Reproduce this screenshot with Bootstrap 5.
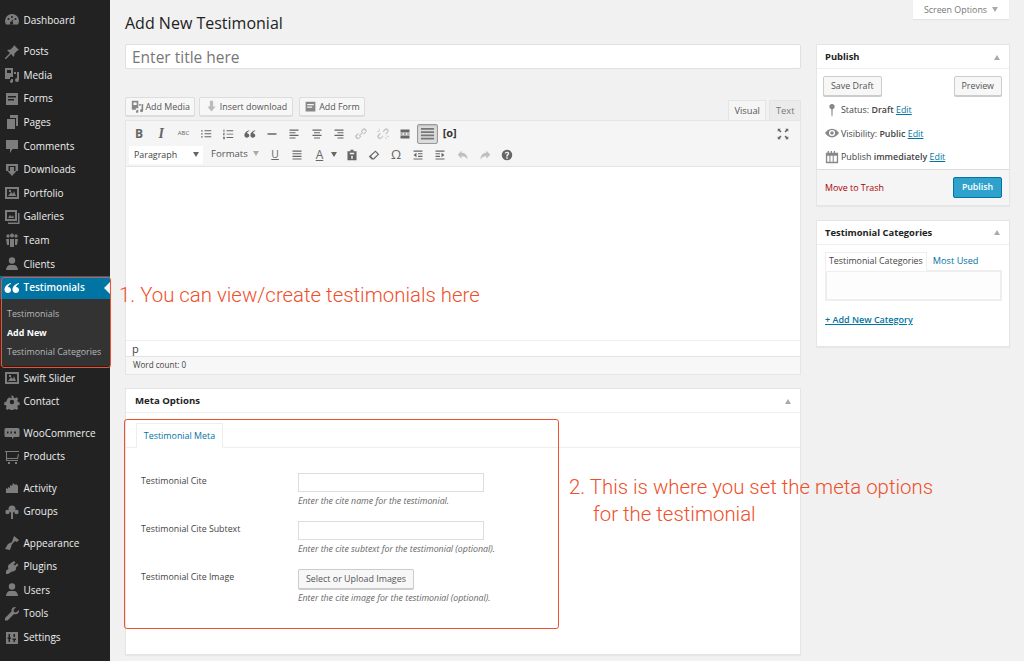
<!DOCTYPE html>
<html lang="en">
<head>
  <meta charset="UTF-8">
  <title>Add New Testimonial</title>
  <link href="https://cdn.jsdelivr.net/npm/bootstrap@5.3.0/dist/css/bootstrap.min.css" rel="stylesheet">
  <style>
    html, body { height: 661px; overflow: hidden; }
    body { background: #f1f1f1; font-family: "Open Sans", sans-serif; font-size: 8.9px; color: #444; position: relative; }
    a { color: #0074a2; }
    b { font-weight: 600; }
    .sprite { position: absolute; }
    .wp-side { width: 110px; height: 661px; background: #222; padding-top: 8.5px; flex: none; }
    .side-item { height: 23.6px; display: flex; align-items: center; color: #eee; font-size: 10px; text-decoration: none; position: relative; }
    .side-item svg { width: 16px; height: 16px; margin-left: 4px; margin-right: 3.5px; fill: #7d7d7d; flex: none; }
    .side-gap { height: 7.8px; flex: none; }
    .side-on { background: #0074a2; color: #fff; font-weight: 600; }
    .side-on svg { fill: #fff; }
    .side-on::after { content: ""; position: absolute; right: 0; top: 6px; border: 6px solid transparent; border-right-color: #f1f1f1; border-left-width: 0; }
    .side-sub { background: #333; height: 67px; padding-top: 5px; }
    .sub-link { display: block; height: 19px; line-height: 19px; padding-left: 7px; font-size: 8.9px; color: #b4b9be; text-decoration: none; white-space: nowrap; }
    .sub-link.now { color: #fff; font-weight: 700; }
    .wp-main { width: 914px; padding: 0 14px 0 15px; position: relative; }
    .screen-tab { position: absolute; right: 15px; top: 0; width: 96px; height: 19px; background: #fff; box-shadow: 0 1px 1px rgba(0,0,0,.05); color: #777; font-size: 8.9px; line-height: 19px; text-align: center; }
    .tri-down { display: inline-block; border: 3.5px solid transparent; border-top: 5px solid #aaa; border-bottom: 0; margin-left: 5px; vertical-align: 1px; }
    .tri-dark { border-top-color: #666; margin-left: 0; }
    .tri-up { border: 3.5px solid transparent; border-bottom: 5px solid #aaa; border-top: 0; }
    .page-head { font-size: 16px; font-weight: 400; color: #222; line-height: 25px; padding-top: 11px; margin: 0; height: 44px; }
    .left-col { width: 676px; }
    .right-col { width: 194px; }
    .title-box { height: 25px; width: 100%; border: 1px solid #e0e0e0; background: #fff; font-size: 15.5px; line-height: 25px; padding: 0 6px; color: #777; border-radius: 2px; }
    .grey-btn { border: 1px solid #ccc; background: #f7f7f7; color: #555; font-size: 8.9px; border-radius: 2px; box-shadow: 0 1px 0 #ccc; height: 20px; padding: 0 7px; display: inline-flex; align-items: center; white-space: nowrap; }
    .media-row { height: 23px; margin-top: 28px; }
    .media-btns { display: flex; gap: 4px; }
    .media-row .grey-btn { height: 19px; padding: 0 4.5px; border-color: #ddd; box-shadow: 0 1px 0 #ddd; }
    .media-row svg { width: 13px; height: 13px; fill: #888; margin-right: 2px; }
    .media-row .pale svg { fill: #bbb; }
    .media-last { margin-left: 2px; }
    .ed-tabs { display: flex; margin-top: 3px; }
    .ed-tab { height: 20px; line-height: 19px; font-size: 9.3px; padding: 0 5.5px; color: #777; background: #ebebeb; border: 1px solid #e4e4e4; border-bottom: 0; margin-left: 3px; }
    .ed-tab.on { background: #f5f5f5; color: #555; }
    .ed-wrap { border: 1px solid #e5e5e5; background: #fff; }
    .ed-bar { height: 46px; background: #f5f5f5; border-bottom: 1px solid #e4e4e4; padding: 2px 3px 0 2px; }
    .bar-row { height: 21px; display: flex; align-items: center; }
    .tool { width: 22.2px; height: 20px; display: flex; align-items: center; justify-content: center; color: #666; flex: none; font-size: 12px; }
    .tool svg { width: 12px; height: 12px; fill: #666; }
    .tool.dim svg { fill: #c0c0c0; }
    .tool.on { width: 20.2px; margin: 0 1px; background: #ddd; border: 1px solid #999; border-radius: 2px; box-shadow: inset 0 1px 2px rgba(0,0,0,.15); }
    .tool.on svg { fill: #777; width: 15px; height: 15px; }
    .tool-b { font-weight: 700; }
    .tool-i { font-family: "Liberation Serif", serif; font-style: italic; font-size: 14px; font-weight: 700; }
    .tool-abc { font-size: 6px; }
    .tool-sc { color: #333; font-size: 11px; font-weight: 700; }
    .tool-u { font-size: 10.4px; text-decoration: underline; margin-left: 1px; }
    .tool-a { text-decoration: underline; font-size: 12px; }
    .tool-om { font-size: 13px; }
    .tool-paste { margin-left: 4px; }
    .tool-full { margin-left: auto; margin-right: 3px; }
    .bar-sel { width: 74px; height: 18px; background: #fff; color: #444; font-size: 8.9px; padding: 0 4px 0 5px; margin: 0 8px 0 1px; display: flex; align-items: center; justify-content: space-between; }
    .bar-fmt { width: 52px; font-size: 9.6px; color: #555; }
    .ed-body { height: 174px; border-bottom: 1px solid #eee; }
    .ed-path { height: 16px; line-height: 15px; padding-left: 6px; font-size: 11px; color: #444; border-bottom: 1px solid #e4e4e4; }
    .ed-count { height: 17px; line-height: 15px; padding-left: 7px; font-size: 8.1px; background: #f7f7f7; color: #444; }
    .meta-card { background: #fff; border: 1px solid #e5e5e5; height: 267px; margin-top: 13px; box-shadow: 0 1px 1px rgba(0,0,0,.04); }
    .card-head { height: 24px; padding: 1px 9px 0; font-size: 9.6px; font-weight: 700; color: #222; border-bottom: 1px solid #eee; display: flex; align-items: center; justify-content: space-between; }
    .side-card .card-head { padding-left: 8px; font-size: 9.4px; }
    .meta-tabs { height: 35px; border-bottom: 1px solid #eee; padding: 10px 0 0 10px; }
    .meta-tab { display: inline-block; width: 87px; height: 25px; line-height: 23px; text-align: center; border: 1px solid #eee; border-bottom: 1px solid #fff; color: #0074a2; font-size: 8.9px; background: #fff; }
    .meta-rows { padding-top: 25px; }
    .meta-row { height: 48px; padding-left: 15px; display: flex; font-size: 8.8px; color: #444; }
    .meta-label { width: 157px; line-height: 16px; }
    .meta-input { width: 186px; height: 19px; border: 1px solid #ddd; background: #fff; }
    .meta-help { font-style: italic; font-size: 8.8px; color: #666; line-height: 12px; margin-top: 3px; }
    .side-card { background: #fff; border: 1px solid #e5e5e5; box-shadow: 0 1px 1px rgba(0,0,0,.04); }
    .pub-btns { padding: 7px 7px 2px 6px; display: flex; justify-content: space-between; }
    .pub-lines { padding: 0 7px 0 8px; }
    .pub-line { height: 23.6px; display: flex; align-items: center; font-size: 8.9px; }
    .pub-line svg { width: 14px; height: 14px; fill: #888; margin-right: 2px; flex: none; }
    .pub-foot { height: 36px; background: #f5f5f5; border-top: 1px solid #ddd; padding: 0 7px 0 8px; display: flex; align-items: center; justify-content: space-between; }
    .trash { color: #a00; }
    .pub-btn { width: 49px; height: 21px; background: #2ea2cc; border: 1px solid #0074a2; border-radius: 2px; color: #fff; font-size: 8.8px; font-weight: 600; text-align: center; line-height: 19px; }
    .cat-card { height: 127px; margin-top: 14px; }
    .cat-wrap { padding: 7px 8px 0; }
    .cat-tab { display: inline-block; height: 19px; line-height: 17px; border: 1px solid #eee; border-bottom: 1px solid #fff; padding: 0 3px; font-size: 8.85px; color: #444; position: relative; margin-bottom: -1px; }
    .cat-used { font-size: 9.2px; color: #0074a2; margin-left: 6px; }
    .cat-panel { height: 31px; border: 2px solid #eee; background: #fdfdfd; width: 177px; }
    .cat-add { display: block; margin-top: 12px; font-size: 9px; font-weight: 600; }
    .mark-box { position: absolute; border: 1.5px solid #f0502d; pointer-events: none; border-radius: 3px; }
    .mark-side { left: 1px; top: 277px; width: 110px; height: 91px; }
    .mark-meta { left: 124px; top: 419px; width: 435px; height: 210px; }
    .mark-text { position: absolute; color: #ef4f2b; font-family: Roboto, "Liberation Sans", sans-serif; font-weight: 300; font-size: 20.4px; line-height: 28px; white-space: nowrap; }
    .note-one { left: 119px; top: 281px; }
    .note-two { left: 569px; top: 473px; }
    .note-three { left: 593px; top: 500px; }
  </style>
</head>
<body>

<svg width="0" height="0" class="sprite">
  <symbol id="i-dash" viewBox="0 0 16 16"><path d="M8 2a7 7 0 0 0-6 10.500h12A7 7 0 0 0 8 2zm0 2a1 1 0 1 1 0 2 1 1 0 0 1 0-2zM4.500 6a1 1 0 1 1 0 2 1 1 0 0 1 0-2zm7 0a1 1 0 1 1 0 2 1 1 0 0 1 0-2zM9.500 7 8.600 10a1.500 1.500 0 1 1-1.300-.4z" fill-rule="evenodd"/></symbol>
  <symbol id="i-pin" viewBox="0 0 16 16"><path d="M10 1l5 5-1.500.5-3 3L10 13 7 10l-5 5-1 0 0-1 5-5-3-3 3.500-.5 3-3z"/></symbol>
  <symbol id="i-media" viewBox="0 0 16 16"><path d="M1 1h8v9H6v2H1zm2 2v3h4V3zM10 5h2v2h-2zm3 0h2v8a2 2 0 1 1-2-2zM7 12h2v2a1.500 1.500 0 1 1-2-1z" fill-rule="evenodd"/></symbol>
  <symbol id="i-form" viewBox="0 0 16 16"><path d="M2 2h12v12H2zm2 3v1.500h8V5zm0 3v1.500h6V8z" fill-rule="evenodd"/></symbol>
  <symbol id="i-pages" viewBox="0 0 16 16"><path d="M6 1h8v11h-2V4H6zM3 5h8v10H3z"/></symbol>
  <symbol id="i-bubble" viewBox="0 0 16 16"><path d="M2 2h12v9H8.500L6 15v-4H2z"/></symbol>
  <symbol id="i-down" viewBox="0 0 16 16"><path d="M2 2h12v7h-2.500V4h-7v5H2zM6 5h4v4h2.500L8 14 3.500 9H6z"/></symbol>
  <symbol id="i-insert" viewBox="0 0 16 16"><path d="M6 1h4v7h3l-5 6-5-6h3z"/></symbol>
  <symbol id="i-image" viewBox="0 0 16 16"><path d="M1 2h14v12H1zm2 2v8h10V4zm1 7 3-4 2 2 1-3 2 5zM5 5h2v2H5z" fill-rule="evenodd"/></symbol>
  <symbol id="i-gallery" viewBox="0 0 16 16"><path d="M1 1h12v11H1zm2 2v7h8V3zm1 6 2-3 2 2 1-2 1 3zM14 4h1.500v11H4v-1.500h10z" fill-rule="evenodd"/></symbol>
  <symbol id="i-team" viewBox="0 0 16 16"><circle cx="4" cy="4" r="1.700"/><circle cx="8" cy="3.500" r="2"/><circle cx="12" cy="4" r="1.700"/><path d="M2 7h3v6H3zM6 7h4v8H6zM11 7h3l-1 6h-2z"/></symbol>
  <symbol id="i-user" viewBox="0 0 16 16"><circle cx="8" cy="4.500" r="3.200"/><path d="M2 14c0-3 2-5 4-5h4c2 0 4 2 4 5z"/></symbol>
  <symbol id="i-quote" viewBox="0 0 16 16"><path d="M7 3C3 4 .5 6.500.5 9.800.5 11.800 2 13 3.800 13S7 11.700 7 10 5.700 7 4 7c0-1 1-2.300 3-3zM15 3c-4 1-6.500 3.500-6.500 6.800 0 2 1.500 3.200 3.300 3.200S15 11.700 15 10s-1.300-3-3-3c0-1 1-2.300 3-3z"/></symbol>
  <symbol id="i-gear" viewBox="0 0 16 16"><path d="M6.500 1h3l.4 2 1.500.7 1.800-1.100 2 2.100-1.100 1.700.7 1.600 2 .5v3l-2 .4-.7 1.500 1.100 1.800-2.100 2-1.700-1.100-1.600.7-.4 2h-3l-.4-2-1.500-.7-1.800 1.100-2-2.100 1.100-1.700-.7-1.600-2-.4v-3l2-.4.7-1.500L2.700 4.700l2.100-2 1.700 1.100 1.600-.7zM8 5.500a2.500 2.500 0 1 0 0 5 2.500 2.500 0 0 0 0-5z" fill-rule="evenodd" transform="translate(1 1) scale(.87)"/></symbol>
  <symbol id="i-woo" viewBox="0 0 16 16"><path d="M2 3h12a1.500 1.500 0 0 1 1.500 1.500v6A1.500 1.500 0 0 1 14 12h-4l-2 2v-2H2a1.500 1.500 0 0 1-1.500-1.500v-6A1.500 1.500 0 0 1 2 3zm1 3.500v2h1.500v-2zm3.500 0v2h1.500v-2zm3.500 0v2h2v-2z" fill-rule="evenodd"/></symbol>
  <symbol id="i-cart" viewBox="0 0 16 16"><path d="M1 2h14v1H3v6h10l1-4h1l-1 5H3v1h11v1H2V3H1zM4 13h2v2H4zM11 13h2v2h-2z"/></symbol>
  <symbol id="i-activity" viewBox="0 0 16 16"><path d="M2 13V8l2 1V7l2 1V5l2 1 1-3 2 2 1-1 2 2v7z"/></symbol>
  <symbol id="i-groups" viewBox="0 0 16 16"><circle cx="8" cy="5" r="3.500"/><circle cx="3.500" cy="8" r="2.200"/><circle cx="12.500" cy="8" r="2.200"/><path d="M7 8h2v7H7z"/></symbol>
  <symbol id="i-brush" viewBox="0 0 16 16"><path d="M10 1l5 4-2 2-2-1-3 3-2 6-5-1 3-5 4-2 1-3z"/></symbol>
  <symbol id="i-plug" viewBox="0 0 16 16"><path d="M10 2l1.500 1.500-2 2 1.500 1 2-2L14.500 6 12 8.500c.5 2-1 4-4 4L4 15H2v-3l2.500-2.500c-1-2-.5-3 .5-4z"/></symbol>
  <symbol id="i-wrench" viewBox="0 0 16 16"><path d="M15 4l-3 2.500-2-.5-.5-2L12 1c-3-.5-5 1.500-4.500 4.500L1 12v2.500h2.500L10 8c3 1 5.500-1 5-4z"/></symbol>
  <symbol id="i-settings" viewBox="0 0 16 16"><path d="M2 2h12v12H2zm2.500 2v3.500H3.500V9h1v3H6V9h1V7.500H6V4zm5 0v3h1.500V4zm0 4.500H8.500V10h1v2H11v-2h1V8.500z" fill-rule="evenodd"/></symbol>
  <symbol id="i-status" viewBox="0 0 16 16"><circle cx="8" cy="4" r="3"/><path d="M7.200 6h1.600l-.3 9h-1z"/></symbol>
  <symbol id="i-eye" viewBox="0 0 16 16"><path d="M8 3c3.500 0 6.500 2.500 8 5-1.500 2.500-4.500 5-8 5s-6.500-2.500-8-5c1.500-2.500 4.500-5 8-5zm0 1.500a3.500 3.500 0 1 0 0 7 3.500 3.500 0 0 0 0-7zM8 6a2 2 0 1 1 0 4 2 2 0 0 1 0-4z" fill-rule="evenodd"/></symbol>
  <symbol id="i-cal" viewBox="0 0 16 16"><path d="M1 3h2V1h1.500v2h2V1H8v2h2V1h1.500v2H15v12H1zm1.500 3.500v7H5v-7zm3.700 0v7h2.600v-7zm3.800 0v7h3.500v-7z" fill-rule="evenodd"/></symbol>
  <symbol id="t-ul" viewBox="0 0 16 16"><path d="M1.500 3h2v1.500h-2zM6 3h9v1.200H6zM1.500 7h2v1.500h-2zM6 7h9v1.200H6zM1.500 11h2v1.500h-2zM6 11h9v1.200H6z"/></symbol>
  <symbol id="t-ol" viewBox="0 0 16 16"><path d="M2 2h1.200v3.500H2zM1.500 7h2.200v1H2.500v.6h1.200v1H1.500zM1.500 11.500h2.200V15H1.500v-1h1.200v-.2H1.500zM6 3h9v1.200H6zM6 7.500h9v1.200H6zM6 12h9v1.200H6z"/></symbol>
  <symbol id="t-hr" viewBox="0 0 16 16"><path d="M2 7h12v2H2z"/></symbol>
  <symbol id="t-left" viewBox="0 0 16 16"><path d="M2 2h12v1.500H2zM2 5.500h8V7H2zM2 9h12v1.500H2zM2 12.500h8V14H2z"/></symbol>
  <symbol id="t-center" viewBox="0 0 16 16"><path d="M2 2h12v1.500H2zM4 5.500h8V7H4zM2 9h12v1.500H2zM4 12.500h8V14H4z"/></symbol>
  <symbol id="t-right" viewBox="0 0 16 16"><path d="M2 2h12v1.500H2zM6 5.500h8V7H6zM2 9h12v1.500H2zM6 12.500h8V14H6z"/></symbol>
  <symbol id="t-link" viewBox="0 0 16 16"><path d="M10 1.500a3 3 0 0 1 4.500 4.500L12 8.500 11 7.500l2.500-2.500A1.500 1.500 0 0 0 11 3L8.500 5.500l-1-1zM8.500 11 6 13.500A3 3 0 0 1 1.500 9L4 6.500l1 1L3 10a1.500 1.500 0 0 0 2.500 2.500L7.500 10zM5 10l5-5 1 1-5 5z"/></symbol>
  <symbol id="t-unlink" viewBox="0 0 16 16"><path d="M10 1.500a3 3 0 0 1 4.500 4.500L12 8.500 11 7.500l2.500-2.500A1.500 1.500 0 0 0 11 3L8.500 5.500l-1-1zM8.500 11 6 13.500A3 3 0 0 1 1.500 9L4 6.500l1 1L3 10a1.500 1.500 0 0 0 2.500 2.500L7.500 10zM2 1l1 0 1 3-1 0zM0 4l3 1 0 1-3-1zM13 15l-1 0-1-3 1 0zM16 12l-3-1 0-1 3 1z"/></symbol>
  <symbol id="t-more" viewBox="0 0 16 16"><path d="M2 2h12v4H2zM2 7.300h3v1.400H2zM6.500 7.300h3v1.400h-3zM11 7.300h3v1.400h-3zM2 10h12v4H2z"/></symbol>
  <symbol id="t-kitchen" viewBox="0 0 16 16"><path d="M1 2h14v2H1zM1 5.500h14v2H1zM1 9h14v2H1zM1 12.500h14v2H1z"/></symbol>
  <symbol id="t-full" viewBox="0 0 16 16"><path d="M1 1h4L3.800 2.200 6 4.500 4.500 6 2.200 3.800 1 5zM15 1v4l-1.200-1.200L11.500 6 10 4.500l2.200-2.300L11 1zM1 15v-4l1.200 1.200L4.500 10 6 11.500l-2.200 2.300L5 15zM15 15h-4l1.200-1.200L10 11.500l1.500-1.500 2.300 2.200L15 11z"/></symbol>
  <symbol id="t-just" viewBox="0 0 16 16"><path d="M2 2h12v1.500H2zM2 5.500h12V7H2zM2 9h12v1.500H2zM2 12.500h12V14H2z"/></symbol>
  <symbol id="t-paste" viewBox="0 0 16 16"><path d="M6 1h4v2h4v12H2V3h4zm-1 4v2h6V5zm2 4v4h2V9z" fill-rule="evenodd"/></symbol>
  <symbol id="t-erase" viewBox="0 0 16 16"><path d="M10 2l5 5-7 7H5l-4-4zm-.2 2L4 9.800l3 3 5.800-5.800z" fill-rule="evenodd"/></symbol>
  <symbol id="t-out" viewBox="0 0 16 16"><path d="M2 2h12v1.500H2zM8 5.500h6V7H8zM8 9h6v1.500H8zM2 12.500h12V14H2zM6 5v6L2 8z"/></symbol>
  <symbol id="t-in" viewBox="0 0 16 16"><path d="M2 2h12v1.500H2zM2 5.500h6V7H2zM2 9h6v1.500H2zM2 12.500h12V14H2zM10 5v6l4-3z"/></symbol>
  <symbol id="t-undo" viewBox="0 0 16 16"><path d="M6 2v3c5 0 8 3 8 9-1.500-3-4-4.500-8-4.500V13L1 7.500z"/></symbol>
  <symbol id="t-redo" viewBox="0 0 16 16"><path d="M10 2v3C5 5 2 8 2 14c1.500-3 4-4.500 8-4.500V13l5-5.500z"/></symbol>
  <symbol id="t-help" viewBox="0 0 16 16"><path d="M8 1a7 7 0 1 1 0 14A7 7 0 0 1 8 1zM7 11v2h2v-2zM8 3.500C6.300 3.500 5 4.500 5 6h2c0-.5.400-1 1-1s1 .4 1 1c0 1-2 1.200-2 3.500V10h2c0-1.800 2-2 2-4.200 0-1.400-1.300-2.300-3-2.300z" fill-rule="evenodd"/></symbol>
</svg>

<div class="d-flex">
  <nav class="wp-side d-flex flex-column">
    <a class="side-item"><svg><use href="#i-dash"/></svg>Dashboard</a>
    <div class="side-gap"></div>
    <a class="side-item"><svg><use href="#i-pin"/></svg>Posts</a>
    <a class="side-item"><svg><use href="#i-media"/></svg>Media</a>
    <a class="side-item"><svg><use href="#i-form"/></svg>Forms</a>
    <a class="side-item"><svg><use href="#i-pages"/></svg>Pages</a>
    <a class="side-item"><svg><use href="#i-bubble"/></svg>Comments</a>
    <a class="side-item"><svg><use href="#i-down"/></svg>Downloads</a>
    <a class="side-item"><svg><use href="#i-image"/></svg>Portfolio</a>
    <a class="side-item"><svg><use href="#i-gallery"/></svg>Galleries</a>
    <a class="side-item"><svg><use href="#i-team"/></svg>Team</a>
    <a class="side-item"><svg><use href="#i-user"/></svg>Clients</a>
    <a class="side-item side-on"><svg><use href="#i-quote"/></svg>Testimonials</a>
    <div class="side-sub">
      <a class="sub-link">Testimonials</a>
      <a class="sub-link now">Add New</a>
      <a class="sub-link">Testimonial Categories</a>
    </div>
    <a class="side-item"><svg><use href="#i-image"/></svg>Swift Slider</a>
    <a class="side-item"><svg><use href="#i-gear"/></svg>Contact</a>
    <div class="side-gap"></div>
    <a class="side-item"><svg><use href="#i-woo"/></svg>WooCommerce</a>
    <a class="side-item"><svg><use href="#i-cart"/></svg>Products</a>
    <div class="side-gap"></div>
    <a class="side-item"><svg><use href="#i-activity"/></svg>Activity</a>
    <a class="side-item"><svg><use href="#i-groups"/></svg>Groups</a>
    <div class="side-gap"></div>
    <a class="side-item"><svg><use href="#i-brush"/></svg>Appearance</a>
    <a class="side-item"><svg><use href="#i-plug"/></svg>Plugins</a>
    <a class="side-item"><svg><use href="#i-user"/></svg>Users</a>
    <a class="side-item"><svg><use href="#i-wrench"/></svg>Tools</a>
    <a class="side-item"><svg><use href="#i-settings"/></svg>Settings</a>
  </nav>

  <main class="wp-main">
    <div class="screen-tab">Screen Options<span class="tri-down"></span></div>
    <h1 class="page-head">Add New Testimonial</h1>
    <div class="d-flex justify-content-between">
      <div class="left-col">
        <div class="title-box">Enter title here</div>

        <div class="media-row d-flex align-items-start justify-content-between">
          <div class="media-btns">
            <span class="grey-btn"><svg><use href="#i-media"/></svg>Add Media</span>
            <span class="grey-btn pale"><svg><use href="#i-insert"/></svg>Insert download</span>
            <span class="grey-btn media-last"><svg><use href="#i-form"/></svg>Add Form</span>
          </div>
          <div class="ed-tabs">
            <span class="ed-tab on">Visual</span>
            <span class="ed-tab">Text</span>
          </div>
        </div>

        <div class="ed-wrap">
          <div class="ed-bar">
            <div class="bar-row">
              <div class="tool tool-b">B</div>
              <div class="tool tool-i">I</div>
              <div class="tool tool-abc">ABC</div>
              <div class="tool"><svg><use href="#t-ul"/></svg></div>
              <div class="tool"><svg><use href="#t-ol"/></svg></div>
              <div class="tool"><svg><use href="#i-quote"/></svg></div>
              <div class="tool"><svg><use href="#t-hr"/></svg></div>
              <div class="tool"><svg><use href="#t-left"/></svg></div>
              <div class="tool"><svg><use href="#t-center"/></svg></div>
              <div class="tool"><svg><use href="#t-right"/></svg></div>
              <div class="tool dim"><svg><use href="#t-link"/></svg></div>
              <div class="tool dim"><svg><use href="#t-unlink"/></svg></div>
              <div class="tool"><svg><use href="#t-more"/></svg></div>
              <div class="tool on"><svg><use href="#t-kitchen"/></svg></div>
              <div class="tool tool-sc">[o]</div>
              <div class="tool tool-full"><svg><use href="#t-full"/></svg></div>
            </div>
            <div class="bar-row">
              <div class="bar-sel">Paragraph<span class="tri-down tri-dark"></span></div>
              <div class="bar-fmt">Formats<span class="tri-down"></span></div>
              <div class="tool tool-u">U</div>
              <div class="tool"><svg><use href="#t-just"/></svg></div>
              <div class="tool tool-a">A</div>
              <span class="tri-down tri-dark"></span>
              <div class="tool tool-paste"><svg><use href="#t-paste"/></svg></div>
              <div class="tool"><svg><use href="#t-erase"/></svg></div>
              <div class="tool tool-om">Ω</div>
              <div class="tool"><svg><use href="#t-out"/></svg></div>
              <div class="tool"><svg><use href="#t-in"/></svg></div>
              <div class="tool dim"><svg><use href="#t-undo"/></svg></div>
              <div class="tool dim"><svg><use href="#t-redo"/></svg></div>
              <div class="tool"><svg><use href="#t-help"/></svg></div>
            </div>
          </div>
          <div class="ed-body"></div>
          <div class="ed-path">p</div>
          <div class="ed-count">Word count: 0</div>
        </div>

        <section class="meta-card">
          <div class="card-head">Meta Options<span class="tri-up"></span></div>
          <div class="meta-tabs"><span class="meta-tab">Testimonial Meta</span></div>
          <div class="meta-rows">
            <div class="meta-row">
              <div class="meta-label">Testimonial Cite</div>
              <div><div class="meta-input"></div><div class="meta-help">Enter the cite name for the testimonial.</div></div>
            </div>
            <div class="meta-row">
              <div class="meta-label">Testimonial Cite Subtext</div>
              <div><div class="meta-input"></div><div class="meta-help">Enter the cite subtext for the testimonial (optional).</div></div>
            </div>
            <div class="meta-row">
              <div class="meta-label">Testimonial Cite Image</div>
              <div><span class="grey-btn">Select or Upload Images</span><div class="meta-help">Enter the cite image for the testimonial (optional).</div></div>
            </div>
          </div>
        </section>
      </div>

      <div class="right-col">
        <section class="side-card">
          <div class="card-head">Publish<span class="tri-up"></span></div>
          <div class="pub-btns">
            <span class="grey-btn">Save Draft</span>
            <span class="grey-btn">Preview</span>
          </div>
          <div class="pub-lines">
            <div class="pub-line"><svg><use href="#i-status"/></svg>Status:&nbsp;<b>Draft</b>&nbsp;<a href="#">Edit</a></div>
            <div class="pub-line"><svg><use href="#i-eye"/></svg>Visibility:&nbsp;<b>Public</b>&nbsp;<a href="#">Edit</a></div>
            <div class="pub-line"><svg><use href="#i-cal"/></svg>Publish&nbsp;<b>immediately</b>&nbsp;<a href="#">Edit</a></div>
          </div>
          <div class="pub-foot">
            <span class="trash">Move to Trash</span>
            <span class="pub-btn">Publish</span>
          </div>
        </section>

        <section class="side-card cat-card">
          <div class="card-head">Testimonial Categories<span class="tri-up"></span></div>
          <div class="cat-wrap">
            <div><span class="cat-tab">Testimonial Categories</span><span class="cat-used">Most Used</span></div>
            <div class="cat-panel"></div>
            <a href="#" class="cat-add">+ Add New Category</a>
          </div>
        </section>
      </div>
    </div>
  </main>
</div>

<div class="mark-box mark-side"></div>
<div class="mark-box mark-meta"></div>
<div class="mark-text note-one">1. You can view/create testimonials here</div>
<div class="mark-text note-two">2. This is where you set the meta options</div>
<div class="mark-text note-three">for the testimonial</div>

<script src="https://cdn.jsdelivr.net/npm/bootstrap@5.3.0/dist/js/bootstrap.bundle.min.js"></script>
</body>
</html>
